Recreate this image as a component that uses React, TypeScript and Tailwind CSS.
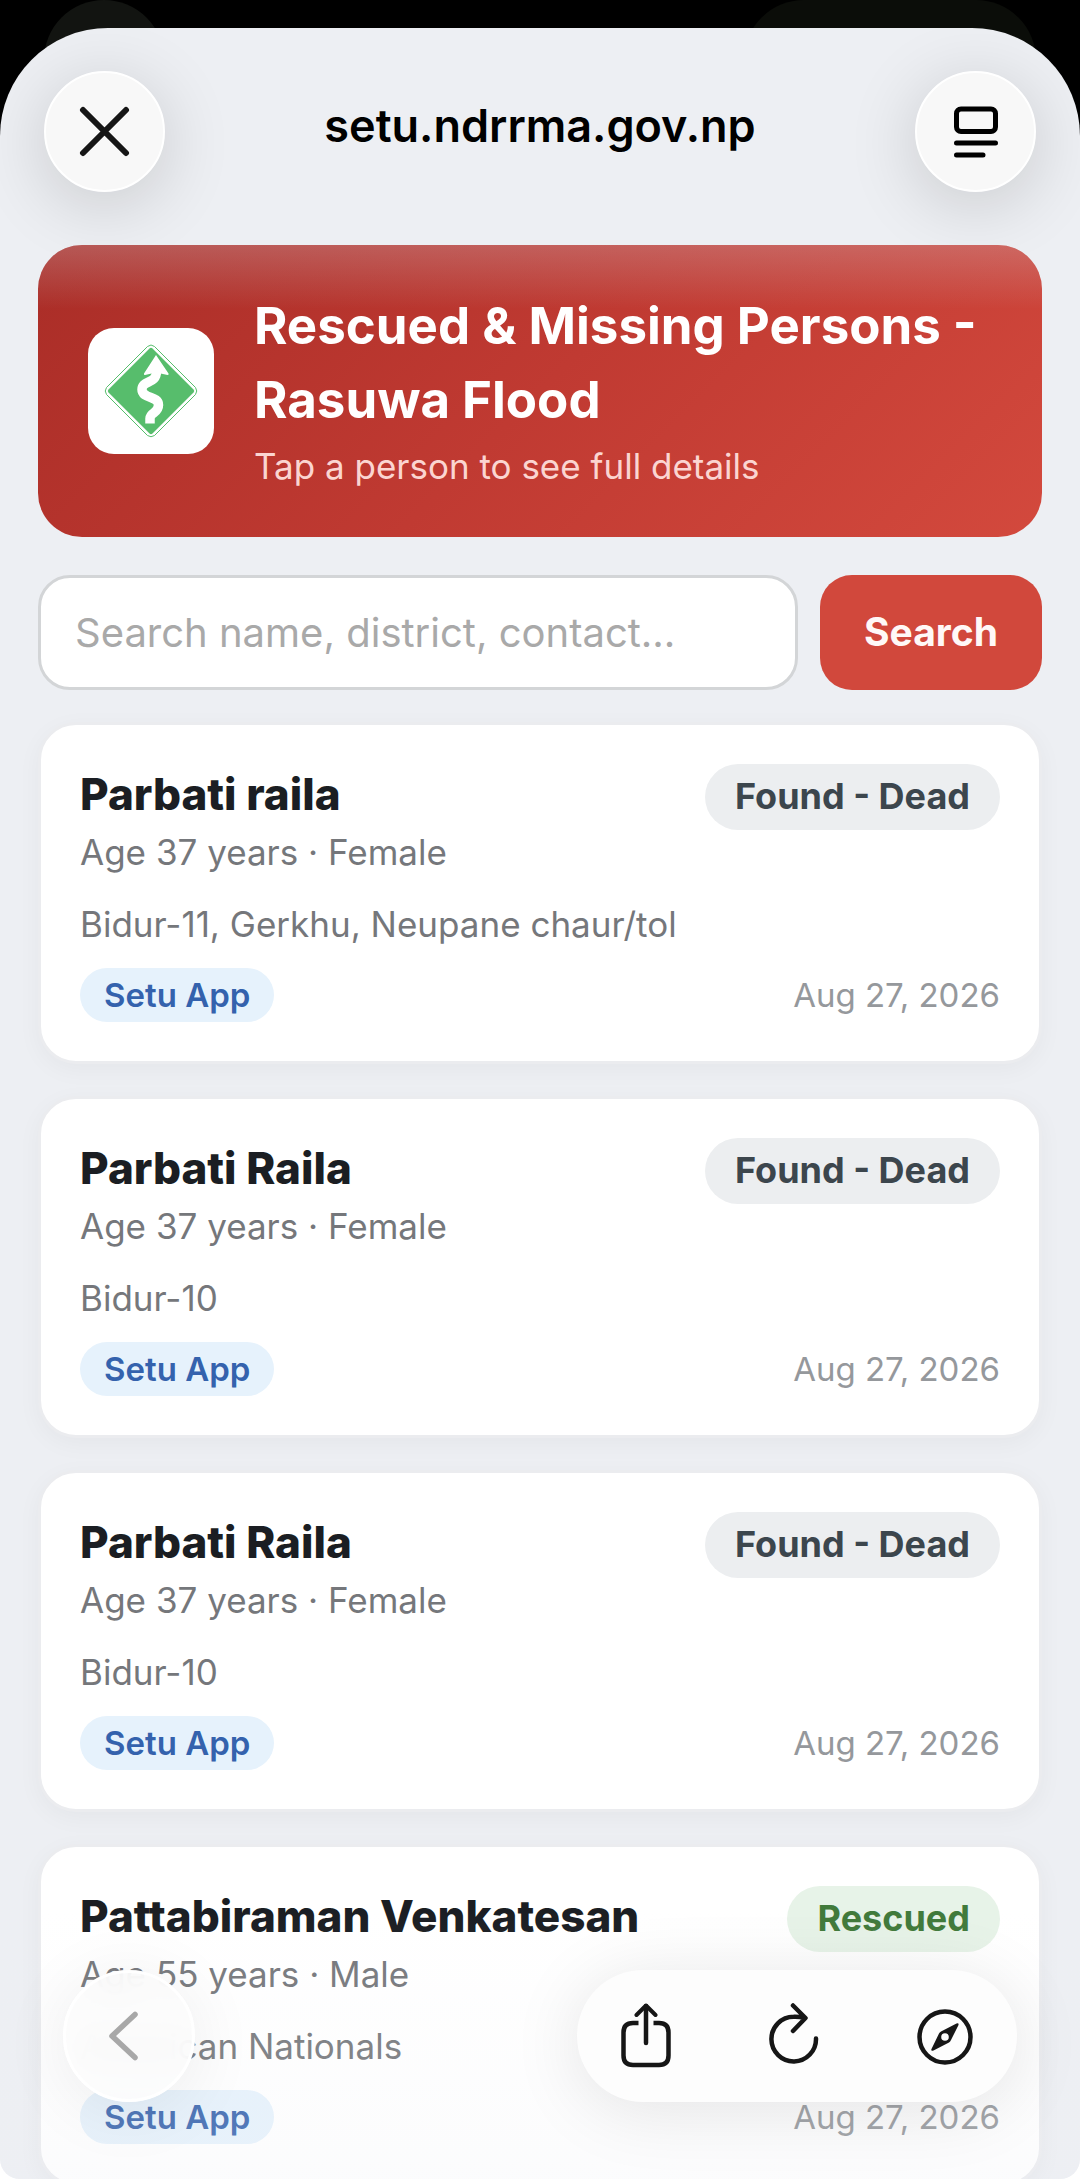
import React, { useState } from 'react';

type Status = 'Found - Dead' | 'Rescued';

interface Person {
  id: number;
  name: string;
  age: number;
  gender: string;
  address: string;
  status: Status;
  source: string;
  date: string;
}

const PERSONS: Person[] = [
  { id: 1, name: 'Parbati raila', age: 37, gender: 'Female', address: 'Bidur-11, Gerkhu, Neupane chaur/tol', status: 'Found - Dead', source: 'Setu App', date: 'Aug 27, 2026' },
  { id: 2, name: 'Parbati Raila', age: 37, gender: 'Female', address: 'Bidur-10', status: 'Found - Dead', source: 'Setu App', date: 'Aug 27, 2026' },
  { id: 3, name: 'Parbati Raila', age: 37, gender: 'Female', address: 'Bidur-10', status: 'Found - Dead', source: 'Setu App', date: 'Aug 27, 2026' },
  { id: 4, name: 'Pattabiraman Venkatesan', age: 55, gender: 'Male', address: 'American Nationals', status: 'Rescued', source: 'Setu App', date: 'Aug 27, 2026' },
];

const STATUS_STYLES: Record<Status, string> = {
  'Found - Dead': 'bg-[#eceef0] text-[#3c464d]',
  Rescued: 'bg-[#e7f3e8] text-[#417a3b]',
};

function SetuLogo() {
  return (
    <div className="flex h-[126px] w-[126px] shrink-0 items-center justify-center rounded-[26px] bg-white">
      <svg width="94" height="94" viewBox="0 0 94 94" fill="none">
        <path d="M43.5 2.5Q47 -0.5 50.500 2.500L91.500 43.500Q94 47 91.500 50.500L50.500 91.500Q47 94 43.500 91.500L2.500 50.500Q0 47 2.500 43.500Z" fill="#fff" stroke="#57bd6c" strokeWidth="1" />
        <path d="M45.500 4.500Q47 3 48.500 4.500L89.500 45.500Q91 47 89.500 48.500L48.500 89.500Q47 91 45.500 89.500L4.500 48.500Q3 47 4.500 45.500Z" fill="#57bd6c" />
        <path d="M46 79.500V74.500C46 68 54.500 69.500 54.500 61C54.500 51.500 38 55 38 45.500C38 35.500 52.500 41 52.500 27" stroke="#fff" strokeWidth="9.500" />
        <path d="M52 11L64.500 29.500Q65 31 63.500 31L52 28.500L41 31Q39.500 31 40 29.500Z" fill="#fff" />
      </svg>
    </div>
  );
}

function PersonCard({ person }: { person: Person }) {
  return (
    <article className="rounded-[38px] border-[3px] border-[#ebecef] bg-white p-[39px] shadow-[0_6px_24px_rgba(0,0,0,0.04)]">
      <div className="flex items-start justify-between">
        <div>
          <h2 className="text-[44px] leading-[60px] font-extrabold text-[#1b1e23]">{person.name}</h2>
          <p className="mt-1 text-[35px] leading-[48px] text-[#75777b]">
            Age {person.age} years · {person.gender}
          </p>
        </div>
        <span className={`rounded-full px-[30px] pb-[2px] text-[36px] leading-[64px] font-bold whitespace-nowrap ${STATUS_STYLES[person.status]}`}>
          {person.status}
        </span>
      </div>
      <p className="mt-6 text-[35px] leading-[48px] text-[#75777b]">{person.address}</p>
      <div className="mt-5 flex items-center justify-between">
        <span className="rounded-full bg-[#e6f2fc] px-6 text-[33px] leading-[54px] font-semibold text-[#3462ad]">{person.source}</span>
        <time className="text-[33px] leading-[54px] text-[#95989c]">{person.date}</time>
      </div>
    </article>
  );
}

export default function App() {
  const [query, setQuery] = useState('');

  return (
    <div className="relative h-screen overflow-hidden bg-linear-to-b from-black from-50% to-white to-50% pt-7 font-['Inter',sans-serif]">
      {/* Dimmed toolbar of the app behind the sheet */}
      <div className="absolute top-0 left-11 h-[120px] w-[120px] rounded-full bg-[#121411]" />
      <div className="absolute top-0 right-11 h-[120px] w-[292px] rounded-full bg-[#0b0d09]" />

      <div className="relative h-full overflow-hidden rounded-t-[108px] rounded-b-[20px] bg-[#edeff3]">
        <header className="flex items-center justify-between px-11 pt-[43px]">
          <button aria-label="Close" className="flex h-[121px] w-[121px] items-center justify-center rounded-full border-2 border-white bg-[#f8f8f8] shadow-[0_12px_70px_rgba(0,0,0,0.16)]">
            <svg width="52" height="52" viewBox="0 0 52 52" fill="none" stroke="#161616" strokeWidth="6" strokeLinecap="round">
              <path d="M4 4L47 47M47 4L4 47" />
            </svg>
          </button>
          <p className="pb-3 text-[45px] leading-[60px] font-semibold text-black">setu.ndrrma.gov.np</p>
          <button aria-label="Reader view" className="flex h-[121px] w-[121px] items-center justify-center rounded-full border-2 border-white bg-[#f8f8f8] shadow-[0_12px_70px_rgba(0,0,0,0.16)]">
            <svg width="44" height="52" viewBox="0 0 44 52" fill="none" stroke="#000" strokeWidth="5" strokeLinecap="round">
              <rect x="2.500" y="3" width="39" height="22.500" rx="4.500" />
              <path d="M2.500 37H41.500M2.500 49H29" />
            </svg>
          </button>
        </header>

        <main className="px-[38px] pt-[53px]">
          <section className="relative flex items-center gap-10 overflow-hidden rounded-[44px] bg-linear-[135deg] from-[#aa2d27] via-[#c03a32] to-[#d3493d] px-[50px] py-11">
            <SetuLogo />
            <div>
              <h1 className="text-[51px] leading-[74px] font-bold text-white">
                Rescued &amp; Missing Persons - Rasuwa Flood
              </h1>
              <p className="mt-1 mb-[2px] text-[35px] leading-[50px] text-[#fbd5d1]">Tap a person to see full details</p>
            </div>
            <div className="absolute inset-x-0 top-0 h-[64px] bg-linear-to-b from-[#d8d8e0]/25 to-transparent" />
          </section>

          <form className="mt-[38px] flex gap-[22px]" onSubmit={(e) => e.preventDefault()}>
            <input
              type="text"
              aria-label="Search name, district, contact"
              value={query}
              onChange={(e) => setQuery(e.target.value)}
              placeholder="Search name, district, contact..."
              className="h-[115px] min-w-0 flex-1 rounded-[32px] border-[3px] border-[#d3d5d7] bg-white px-[34px] text-[40px] text-[#1b1e23] outline-none placeholder:text-[#a9a9a9]"
            />
            <button type="submit" className="h-[115px] shrink-0 rounded-[32px] bg-[#d1483c] px-11 text-[39px] font-bold text-[#fff8f7]">
              Search
            </button>
          </form>

          <div className="mt-8 flex flex-col gap-8">
            {PERSONS.map((person) => (
              <PersonCard key={person.id} person={person} />
            ))}
          </div>
        </main>

        {/* Floating browser controls */}
        <div className="absolute inset-x-0 bottom-0 flex items-center justify-between bg-linear-to-b from-transparent to-[#eeeff4]/20 px-[63px] pt-[60px] pb-[77px]">
          <button aria-label="Back" className="flex h-[132px] w-[132px] items-center justify-center rounded-full border-[3px] border-white bg-[#fcfcfc]/90 pr-3 shadow-[0_8px_70px_rgba(0,0,0,0.07)] backdrop-blur-lg">
            <svg width="32" height="52" viewBox="0 0 32 52" fill="none" stroke="#a8a8a8" strokeWidth="5.500" strokeLinecap="round" strokeLinejoin="round">
              <path d="M28 4.500L5 26L28 47.500" />
            </svg>
          </button>
          <div className="flex h-[132px] w-[440px] items-center justify-between rounded-full bg-[#fdfdfd] px-11 shadow-[0_8px_70px_rgba(0,0,0,0.1)]">
            <button aria-label="Share">
              <svg width="50" height="66" viewBox="0 0 50 66" fill="none" stroke="#161616" strokeWidth="4.500" strokeLinecap="round" strokeLinejoin="round">
                <path strokeLinecap="butt" d="M17.500 20H12Q2.500 20 2.500 29.500V52.500Q2.500 62 12 62H38Q47.500 62 47.500 52.500V29.500Q47.500 20 38 20H32.500" />
                <path d="M25 40V3" />
                <path strokeWidth="4" d="M15.500 12L25 2.500L34.500 12" />
              </svg>
            </button>
            <button aria-label="Reload">
              <svg width="50" height="66" viewBox="0 0 50 66" fill="none" stroke="#161616" strokeWidth="4.500" strokeLinecap="round" strokeLinejoin="round">
                <path d="M47 35.500A22.300 22.300 0 1 1 24.700 13.800Q30 13.600 36 15M24 2.500L36.500 15L24 28" />
              </svg>
            </button>
            <button aria-label="Open in Safari">
              <svg width="56" height="66" viewBox="0 0 56 66" fill="none">
                <circle cx="28" cy="34" r="25.500" stroke="#161616" strokeWidth="4.500" />
                <path fillRule="evenodd" fill="#161616" d="M39.500 20.500Q42 19.500 41.500 22L34 37Q33.300 38.500 32 39.500L16.500 47.500Q13.500 48.500 14.500 46L22 30.500Q22.500 29.500 24 28.500ZM28 30.200A3.800 3.800 0 1 0 28 37.800A3.800 3.800 0 1 0 28 30.200Z" />
              </svg>
            </button>
          </div>
        </div>
      </div>
    </div>
  );
}
